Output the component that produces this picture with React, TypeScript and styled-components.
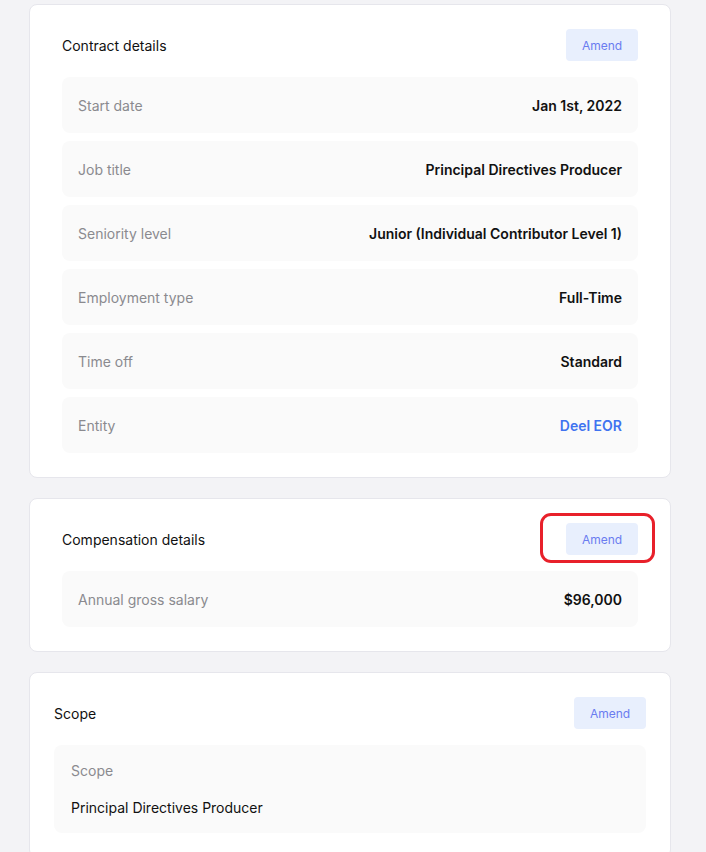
import React from 'react';
import styled, { createGlobalStyle } from 'styled-components';

const GlobalStyle = createGlobalStyle`
  html, body {
    margin: 0;
    padding: 0;
    background: #f3f3f6;
    font-family: Inter, "Noto Sans", "Liberation Sans", sans-serif;
    -webkit-font-smoothing: antialiased;
  }
  * { box-sizing: border-box; }
`;

const Page = styled.div`
  display: flex;
  flex-direction: column;
  gap: 20px;
  width: 642px;
  margin-left: 29px;
  padding: 4px 0 40px;
`;

const Card = styled.section<{ $pad: number }>`
  background: #ffffff;
  border: 1px solid #e6e6ec;
  border-radius: 8px;
  padding: 24px ${p => p.$pad}px 24px;
  display: flex;
  flex-direction: column;
  gap: 16px;
`;

const Header = styled.div`
  display: flex;
  align-items: center;
  justify-content: space-between;
  height: 32px;
`;

const Title = styled.h2`
  margin: 0;
  font-size: 14px;
  font-weight: 400;
  color: #111111;
`;

const AmendWrap = styled.div`
  position: relative;
`;

const AmendButton = styled.button`
  width: 72px;
  height: 32px;
  border: none;
  border-radius: 4px;
  background: #e8effd;
  color: #6a7cf0;
  font-family: inherit;
  font-size: 12px;
  cursor: pointer;
`;

const Highlight = styled.div`
  position: absolute;
  left: -26px;
  top: -10px;
  width: 115px;
  height: 50px;
  border: 3.5px solid #e8202a;
  border-radius: 11px;
  pointer-events: none;
`;

const Rows = styled.div`
  display: flex;
  flex-direction: column;
  gap: 8px;
`;

const Row = styled.div`
  display: flex;
  align-items: center;
  justify-content: space-between;
  height: 56px;
  padding: 0 16px;
  background: #fafafa;
  border-radius: 8px;
  font-size: 14px;
`;

const Label = styled.span`
  color: #8a8a8f;
`;

const Value = styled.span<{ $link?: boolean }>`
  font-weight: 600;
  color: ${p => (p.$link ? '#3f73f0' : '#111111')};
`;

const ScopeBox = styled.div`
  display: flex;
  flex-direction: column;
  gap: 17px;
  padding: 16px 17px 15px;
  background: #fafafa;
  border-radius: 8px;
  font-size: 14px;
  line-height: 20px;
`;

const ScopeText = styled.span`
  color: #111111;
`;

const contract = [
  { label: 'Start date', value: 'Jan 1st, 2022' },
  { label: 'Job title', value: 'Principal Directives Producer' },
  { label: 'Seniority level', value: 'Junior (Individual Contributor Level 1)' },
  { label: 'Employment type', value: 'Full-Time' },
  { label: 'Time off', value: 'Standard' },
  { label: 'Entity', value: 'Deel EOR', link: true },
];

export default function App() {
  return (
    <>
      <GlobalStyle />
      <Page>
        <Card $pad={32}>
          <Header>
            <Title>Contract details</Title>
            <AmendButton>Amend</AmendButton>
          </Header>
          <Rows>
            {contract.map(r => (
              <Row key={r.label}>
                <Label>{r.label}</Label>
                <Value $link={r.link}>{r.value}</Value>
              </Row>
            ))}
          </Rows>
        </Card>

        <Card $pad={32}>
          <Header>
            <Title>Compensation details</Title>
            <AmendWrap>
              <AmendButton>Amend</AmendButton>
              <Highlight />
            </AmendWrap>
          </Header>
          <Rows>
            <Row>
              <Label>Annual gross salary</Label>
              <Value>$96,000</Value>
            </Row>
          </Rows>
        </Card>

        <Card $pad={24}>
          <Header>
            <Title>Scope</Title>
            <AmendButton>Amend</AmendButton>
          </Header>
          <ScopeBox>
            <Label>Scope</Label>
            <ScopeText>Principal Directives Producer</ScopeText>
          </ScopeBox>
        </Card>
      </Page>
    </>
  );
}
